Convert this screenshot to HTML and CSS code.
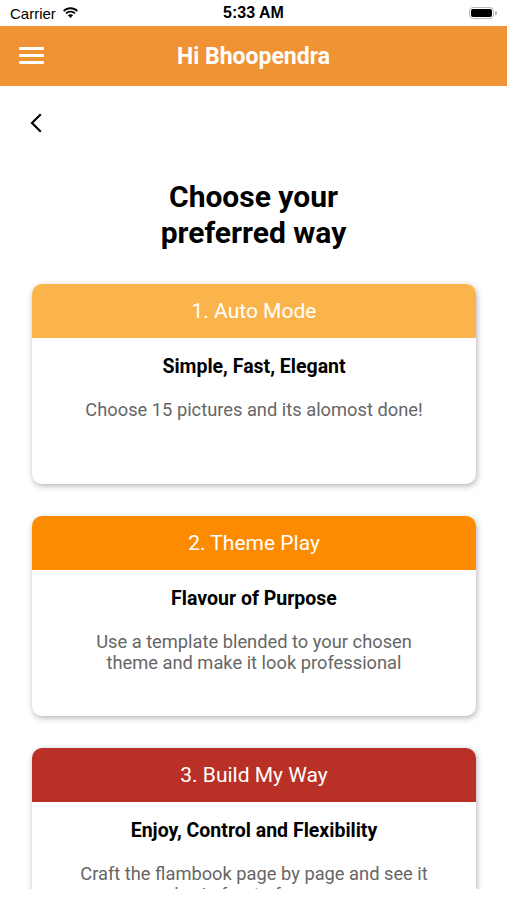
FILE: index.html
```html
<html lang="en">
    <head>
        <meta charset="UTF-8">
        <meta name="viewport" content="width=device-width, initial-scale=1.0">
        <title>Choose your preferred way</title>
        <link rel="stylesheet" href="styles.css">
    </head>
    <body>
        <div class="status-bar">
            <div class="carrier">
                Carrier
                <svg width="17" height="12" viewBox="0 0 17 12">
                    <path d="M8.5 2.2c2.4 0 4.6.9 6.2 2.5l1.3-1.3C14 1.4 11.4.3 8.5.3S3 1.4 1 3.4l1.3 1.3C3.9 3.1 6.1 2.2 8.5 2.2z" fill="#000"/>
                    <path d="M8.5 5.6c1.5 0 2.8.6 3.8 1.5l1.3-1.3C12.3 4.5 10.5 3.7 8.5 3.7S4.7 4.5 3.4 5.8l1.3 1.3c1-.9 2.3-1.5 3.8-1.5z" fill="#000"/>
                    <path d="M8.5 8.9c.6 0 1.1.2 1.5.6L8.5 11 7 9.5c.4-.4.9-.6 1.5-.6z" fill="#000"/>
                    <path d="M8.5 7.3c1 0 1.9.4 2.6 1L9.9 9.5c-.4-.3-.9-.5-1.4-.5s-1 .2-1.4.5L5.9 8.3c.7-.6 1.6-1 2.6-1z" fill="#000"/>
                </svg>
            </div>
            <div class="clock">5:33 AM</div>
            <div class="battery">
                <span class="battery-body"><span class="battery-level"></span></span>
                <span class="battery-cap"></span>
            </div>
        </div>

        <div class="app-bar">
            <button class="menu-btn" type="button" aria-label="Menu">
                <span></span><span></span><span></span>
            </button>
            <h2>Hi Bhoopendra</h2>
        </div>

        <div class="content">
            <button class="back-btn" type="button" aria-label="Back">
                <svg width="14" height="20" viewBox="0 0 14 20">
                    <path d="M11 2 L3 10 L11 18" fill="none" stroke="#000" stroke-width="2.2" stroke-linecap="square"/>
                </svg>
            </button>

            <h1>Choose your<br>preferred way</h1>

            <div class="modes">
                <div class="mode-card">
                    <div class="mode-header auto">1. Auto Mode</div>
                    <div class="mode-body">
                        <h3>Simple, Fast, Elegant</h3>
                        <p>Choose 15 pictures and its alomost done!</p>
                    </div>
                </div>
                <div class="mode-card">
                    <div class="mode-header theme">2. Theme Play</div>
                    <div class="mode-body">
                        <h3>Flavour of Purpose</h3>
                        <p>Use a template blended to your chosen theme and make it look professional</p>
                    </div>
                </div>
                <div class="mode-card">
                    <div class="mode-header build">3. Build My Way</div>
                    <div class="mode-body">
                        <h3>Enjoy, Control and Flexibility</h3>
                        <p>Craft the flambook page by page and see it evolve in front of your eyes</p>
                    </div>
                </div>
            </div>
        </div>
    </body>
</html>
```

FILE: styles.css
```css
* {
    margin: 0;
    padding: 0;
    box-sizing: border-box;
}

body {
    width: 507px;
    background-color: white;
    font-family: Roboto, "Noto Sans", sans-serif;
}

button {
    background: none;
    border: none;
    cursor: pointer;
}

.status-bar {
    height: 26px;
    display: grid;
    grid-template-columns: 1fr auto 1fr;
    align-items: center;
    padding: 0 10px;
    font-family: "Liberation Sans", Arial, sans-serif;
    font-size: 15px;
    color: #000;
}

.carrier {
    display: flex;
    align-items: center;
    gap: 6px;
}

.clock {
    font-weight: bold;
    font-size: 16px;
}

.battery {
    justify-self: end;
    display: flex;
    align-items: center;
}

.battery-body {
    width: 25px;
    height: 12px;
    border: 1px solid #bbb;
    border-radius: 4px;
    padding: 1px;
    display: flex;
}

.battery-level {
    flex: 1;
    background-color: #000;
    border-radius: 2px;
}

.battery-cap {
    width: 2px;
    height: 4px;
    background-color: #bbb;
    border-radius: 0 1px 1px 0;
    margin-left: 1px;
}

.app-bar {
    height: 60px;
    background-color: #ef9334;
    display: flex;
    align-items: center;
    justify-content: center;
    position: relative;

    h2 {
        color: white;
        font-size: 23px;
        font-weight: bold;
    }
}

.menu-btn {
    position: absolute;
    left: 19px;
    top: 21px;
    display: flex;
    flex-direction: column;
    gap: 4px;

    span {
        display: block;
        width: 25px;
        height: 3px;
        background-color: white;
        border-radius: 1px;
    }
}

.content {
    height: 803px;
    overflow: hidden;
}

.back-btn {
    display: block;
    margin: 27px 0 0 29px;
    height: 20px;
}

h1 {
    margin-top: 46px;
    text-align: center;
    font-size: 30px;
    line-height: 36px;
    font-weight: bold;
    color: #000;
}

.modes {
    margin-top: 33px;
    padding: 0 31px 0 32px;
    display: flex;
    flex-direction: column;
    gap: 32px;
}

.mode-card {
    height: 200px;
    border-radius: 10px;
    background-color: white;
    box-shadow: 1px 2px 6px rgba(0, 0, 0, 0.3);
    overflow: hidden;
    flex-shrink: 0;
}

.mode-header {
    height: 54px;
    display: flex;
    align-items: center;
    justify-content: center;
    color: white;
    font-size: 21px;
}

.mode-header.auto {
    background-color: #fbb44b;
}

.mode-header.theme {
    background-color: #fd8b01;
}

.mode-header.build {
    background-color: #b93126;
}

.mode-body {
    padding: 17px 40px 0;
    text-align: center;

    h3 {
        font-size: 19.5px;
        line-height: 24px;
        font-weight: bold;
        color: #000;
    }

    p {
        margin-top: 20px;
        font-size: 18.3px;
        line-height: 21px;
        color: #666;
    }
}
```
